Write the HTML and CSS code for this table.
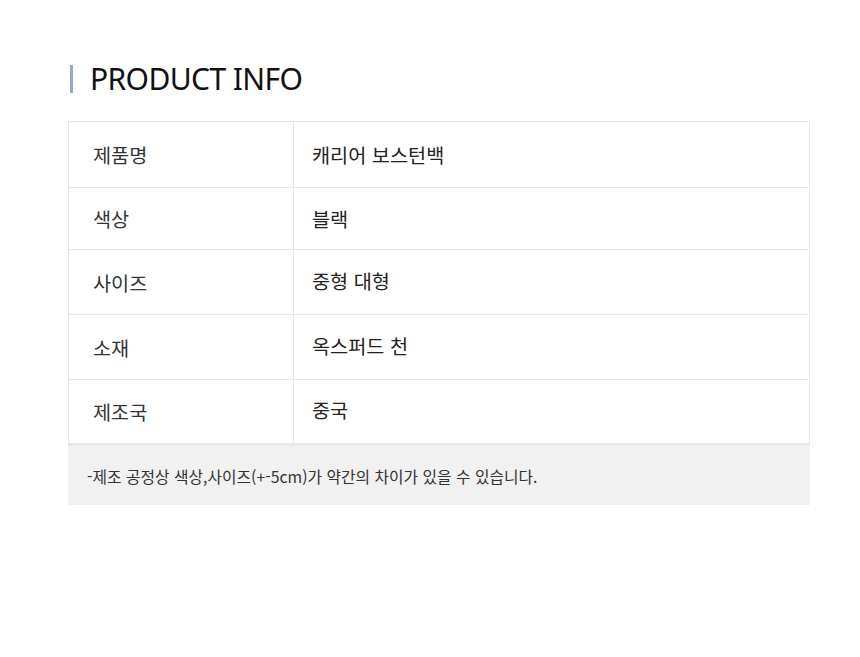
FILE: index.html
```html
<!DOCTYPE html>
<html lang="ko">
<head>
    <meta charset="UTF-8">
    <meta name="viewport" content="width=device-width, initial-scale=1.0">
    <link rel="stylesheet" href="styles.css">
</head>
<body>
    <div class="info-wrap">
        <h2 class="info-title">PRODUCT INFO</h2>
        <table class="info-table">
            <tr class="row-1">
                <th>제품명</th>
                <td>캐리어 보스턴백</td>
            </tr>
            <tr class="row-2">
                <th>색상</th>
                <td>블랙</td>
            </tr>
            <tr class="row-3">
                <th>사이즈</th>
                <td>중형 대형</td>
            </tr>
            <tr class="row-4">
                <th>소재</th>
                <td>옥스퍼드 천</td>
            </tr>
            <tr class="row-5">
                <th>제조국</th>
                <td>중국</td>
            </tr>
        </table>
        <div class="info-note">-제조 공정상 색상,사이즈(+-5cm)가 약간의 차이가 있을 수 있습니다.</div>
    </div>
</body>
</html>
```

FILE: styles.css
```css
body {
    margin: 0;
    background-color: #fff;
    font-family: "Noto Sans CJK KR", "Noto Sans", sans-serif;
    color: #222;
}

.info-wrap {
    width: 742px;
    margin: 0 0 0 68px;
    padding-top: 65px;
}

.info-title {
    margin: 0 0 28px 2px;
    padding-left: 17px;
    border-left: 3px solid #8fa9d4;
    font-family: "Noto Sans", sans-serif;
    font-weight: 400;
    font-size: 30px;
    line-height: 28px;
    height: 28px;
    color: #111;
    letter-spacing: -0.6px;
}

.info-table {
    width: 100%;
    border-collapse: collapse;
    border: 1px solid #e6e6e6;
}

.info-table th,
.info-table td {
    border-bottom: 1px solid #e6e6e6;
    font-size: 19.7px;
    font-weight: 400;
    text-align: left;
    vertical-align: middle;
    padding: 0;
}

.info-table th {
    width: 200px;
    padding-left: 24px;
    border-right: 1px solid #e6e6e6;
    color: #333;
}

.info-table td {
    padding-left: 18px;
    color: #222;
}

.row-1 { height: 66px; }
.row-2 { height: 62px; }
.row-3 { height: 65px; }
.row-4 { height: 65px; }
.row-5 { height: 64px; }

.row-3 td,
.row-4 td,
.row-5 td {
    padding-bottom: 4px;
}

.info-note {
    background-color: #f1f1f1;
    border-top: 2px solid #e8e8e8;
    height: 59px;
    line-height: 62px;
    padding-left: 19px;
    font-size: 15.8px;
    color: #333;
}
```
